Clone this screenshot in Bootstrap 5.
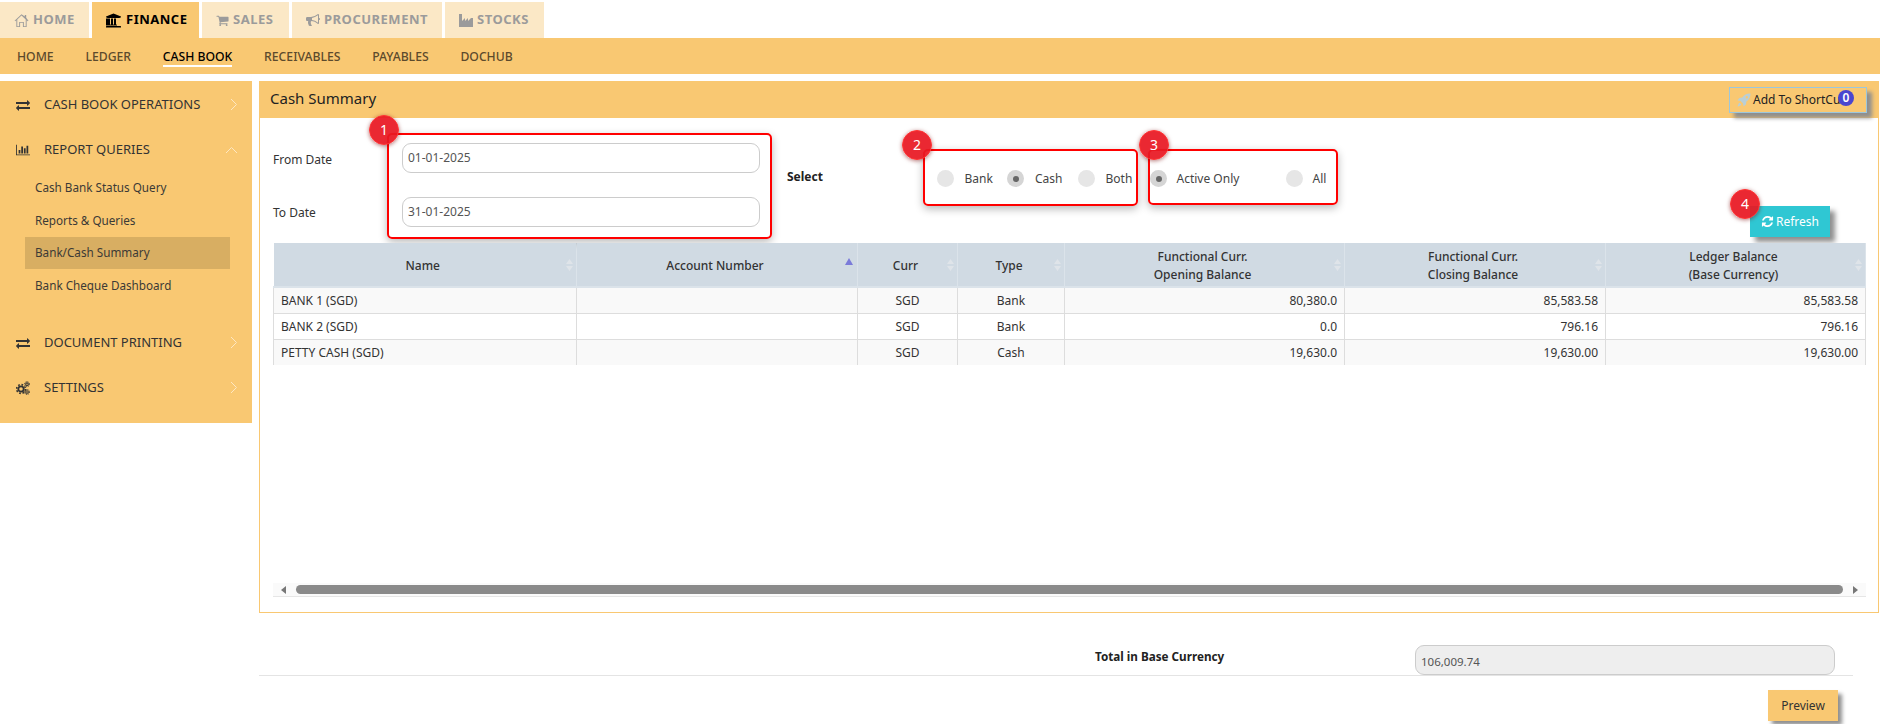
<!DOCTYPE html>
<html lang="en">
<head>
<meta charset="utf-8">
<title>Cash Summary</title>
<link href="https://cdn.jsdelivr.net/npm/bootstrap@5.3.0/dist/css/bootstrap.min.css" rel="stylesheet">
<style>
:root{--amber:#f9c872;--pale:#fbe8c6;}
html,body{height:724px;overflow:hidden;background:#fff;}
body{font-family:"Noto Sans","Open Sans",sans-serif;font-size:12px;color:#333;}
svg{fill:currentColor;display:block;flex:none;}
.topbar{padding-top:2px;height:38px;gap:3px;}
.toptab{height:36px;background:var(--pale);color:#9b9b9b;font-weight:700;font-size:13px;letter-spacing:.5px;gap:4px;padding:0 0 0 14px;text-decoration:none;}
.toptab.on{background:var(--amber);color:#000;}
.tab-home{width:89px;}.tab-fin{width:107px;}.tab-sal{width:87px;}.tab-pro{width:150px;}.tab-sto{width:99px;}
.subbar{height:36px;background:var(--amber);padding-left:17px;gap:31.8px;}
.subitem{color:#5c4a2c;font-size:12.2px;font-weight:500;text-decoration:none;line-height:17px;border-bottom:2px solid transparent;margin-top:2px;}
.subitem.on{color:#000;border-bottom-color:#fff;}
.mainrow{margin-top:7px;gap:7px;}
.sidepane{width:252px;height:342px;background:var(--amber);flex:none;color:#333;padding-top:1px;}
.sidehead{height:45px;font-size:13px;padding-left:16px;padding-right:14px;}
.sidehead svg.lead-ic{width:14px;height:14px;margin-right:14px;}
.sidechev{margin-left:auto;color:#fde7c2;}
.sidegroup{margin-top:-1px;}
.sideprint{margin-top:18px;}
.sidelink{height:33px;margin-left:25px;width:205px;padding-left:10px;display:flex;align-items:center;font-size:11.7px;color:#3c3a36;}
.sidelink.on{background:#d8ae62;height:32px;}
.contentwrap{width:1620px;flex:none;}
.panelbox{height:532px;border:1px solid var(--amber);border-top:0;}
.panelhead{height:37px;background:var(--amber);margin:0 -1px;padding:0 12px 2px 11px;font-size:15px;color:#222;position:relative;}
.shortbtn{width:138px;height:26px;margin-top:3px;border:1px solid #9cc7dc;background:var(--amber);box-shadow:5px 5px 4px #8f8f8f;font-size:12px;color:#222;padding-left:7px;gap:2px;position:relative;}
.rocket{fill:#b9cfd6;}
.countdot{position:absolute;top:2px;left:108px;width:16px;height:16px;border-radius:50%;background:#4a46cf;color:#fff;font-size:12px;font-weight:600;line-height:16px;text-align:center;}
.filters{height:125px;padding-left:13px;}
.datecol{width:114px;padding-top:33px;font-size:12px;color:#333;}
.datecol div{height:53px;}
.redbox{border:2px solid #f00;border-radius:5px;box-shadow:0 3px 8px rgba(0,0,0,.28);position:relative;flex:none;}
.numdot{position:absolute;width:30px;height:30px;border-radius:50%;background:rgba(232,24,34,.93);border:1px solid #f33;box-shadow:0 1px 4px rgba(120,0,0,.55);color:#fff;font-size:14px;line-height:28px;text-align:center;z-index:3;}
.box-date{width:385px;height:106px;margin-top:15px;padding:8px 10px 0 13px;}
.box-date .numdot{left:-20px;top:-20px;}
.datefield{height:30px;border:1px solid #ccc;border-radius:9px;padding:0 5px;color:#555;font-size:12px;margin-bottom:24px;}
.selectlbl{width:136px;margin-left:15px;margin-top:50px;font-weight:700;font-size:12px;color:#222;}
.box-src{width:215px;height:57px;margin-top:31px;font-size:12px;}
.box-src .numdot{left:-23px;top:-21px;}
.box-act{width:190px;height:56px;margin-top:31px;margin-left:10px;font-size:12px;}
.box-act .numdot{left:-11px;top:-21px;}
.radiodot{width:17px;height:17px;border-radius:50%;background:#e6e6e6;flex:none;position:relative;}
.radiodot.on{background:#d5d5d5;}
.radiodot.on::after{content:"";position:absolute;left:5.5px;top:5.5px;width:6px;height:6px;border-radius:50%;background:#666;}
.optwrap-a{position:absolute;left:11.5px;top:19px;}
.act-wrap{left:0;}
.opt{color:#444;line-height:17px;}
.box-src .radiodot{margin-right:11px}.box-src .t1{width:42.5px;}.box-src .t2{width:42.5px;}
.box-act .r1{margin-right:9.5px}.box-act .t1{width:109px;}
.box-act .r2{margin-right:10px}
.refreshbtn{margin-left:auto;margin-right:48px;margin-top:88px;width:80px;height:31px;background:#2fc7d3;color:#fff;font-size:12px;gap:2px;box-shadow:5px 5px 5px #8f8f8f;position:relative;flex:none;}
.refreshbtn .numdot{left:-20px;top:-17px;}
.gridarea{height:354px;margin-left:13px;margin-right:12px;}
.sumtable{width:1592px;table-layout:fixed;margin:0;font-size:12px;color:#333;--bs-table-striped-bg:#f9f9f9;--bs-table-border-color:#ddd;--bs-table-striped-color:#333;}
.sumtable th{background:#d0dae3;--bs-table-bg:#d0dae3;height:44px;padding:3px 26px 0 22px;text-align:center;vertical-align:middle;font-weight:500;line-height:18px;border:1px solid #dbe3ea;border-width:0 1px 2px 0;color:#333;position:relative;}
.sumtable td{height:26px;padding:1px 7px 0;vertical-align:middle;border-width:0 1px 1px 1px;}
.sumtable tbody tr:last-child td{border-bottom:0;padding-top:2px;}
.c1{width:303px}.c2{width:281px}.c3{width:100px}.c4{width:107px}.c5{width:280px}.c6{width:261px}.c7{width:260px}
.sorter{position:absolute;right:3px;top:15px;color:#dfe4e9;}
.sorter.asc{top:15px;right:4px;color:#7b7bd9;}
.scrollline{height:14px;background:#fafafa;border-bottom:1px solid #e6e6e6;padding:0 8px;color:#777;}
.scrollthumb{flex:1;height:9px;background:#8a8a8a;border-radius:5px;margin:0 10px 0 10px;}
.totalrow{margin-top:32px;width:1594px;height:31px;border-bottom:1px solid #e4e4e4;}
.totallbl{margin-left:836px;width:320px;font-weight:700;font-size:11.7px;color:#222;padding-bottom:7px;}
.totalfield{width:420px;height:30px;background:#eee;border:1px solid #ccc;border-radius:9px;padding:7px 5px 0 5px;color:#555;font-size:11.5px;margin:0;}
.previewbtn{width:70px;height:31px;background:var(--amber);font-size:12px;color:#333;margin:14px 0 0 1509px;box-shadow:4px 4px 4px #8f8f8f;}
</style>
</head>
<body>
<nav class="topbar d-flex">
  <a class="toptab tab-home d-flex align-items-center" href="#"><svg width="15" height="15" viewBox="0 0 16 16"><path d="M8 1.2 .6 8.2l.7.7L2.5 7.8V15h4v-4.5h3V15h4V7.8l1.2 1.1.7-.7L13 5V2h-1.5v1.6zM12.5 14H10.500V9.500h-5V14H3.500V6.900L8 2.600l4.500 4.300z"/></svg>HOME</a>
  <a class="toptab on tab-fin d-flex align-items-center" href="#"><svg width="16" height="15" viewBox="0 0 2048 1792"><path d="M960 0l960 384v128h-128q0 26-20.500 45t-48.500 19h-1526q-28 0-48.500-19t-20.500-45h-128v-128zm-704 640h256v768h128v-768h256v768h128v-768h256v768h59q28 0 48.500 19t20.500 45v64h-1664v-64q0-26 20.500-45t48.500-19h59v-768zm1595 960q28 0 48.500 19t20.500 45v128h-1920v-128q0-26 20.500-45t48.500-19h1782z"/></svg>FINANCE</a>
  <a class="toptab tab-sal d-flex align-items-center" href="#"><svg width="13" height="13" viewBox="0 0 1792 1792"><path d="M704 1536q0 52-38 90t-90 38-90-38-38-90 38-90 90-38 90 38 38 90zm896 0q0 52-38 90t-90 38-90-38-38-90 38-90 90-38 90 38 38 90zm128-1088v512q0 24-16.500 42.500t-40.500 21.500l-1044 122q13 60 13 70 0 16-24 64h920q26 0 45 19t19 45-19 45-45 19h-1024q-26 0-45-19t-19-45q0-11 8-31.500t16-36 21.500-40 15.500-29.500l-177-823h-204q-26 0-45-19t-19-45 19-45 45-19h256q16 0 28.500 6.500t19.500 15.500 13 24.500 8 26 5.500 29.500 4.500 26h1201q26 0 45 19t19 45z"/></svg>SALES</a>
  <a class="toptab tab-pro d-flex align-items-center" href="#"><svg width="14" height="14" viewBox="0 0 1792 1792"><path d="M1664 640q53 0 90.500 37.500t37.500 90.500-37.500 90.500-90.500 37.500v384q0 52-38 90t-90 38q-417-347-812-380-58 19-91 66t-31 100.500 40 92.500q-20 33-23 65.500t6 58 33.500 55 48 50 61.500 50.500q-29 58-111.500 83t-168.500 11.500-132-55.500q-7-23-29.500-87.500t-32-94.500-23-89-15-101 3.500-98.500 22-110.500h-122q-66 0-113-47t-47-113v-192q0-66 47-113t113-47h480q435 0 896-384 52 0 90 38t38 90v384zm-128 604v-954q-394 302-768 343v270q377 42 768 341z"/></svg>PROCUREMENT</a>
  <a class="toptab tab-sto d-flex align-items-center" href="#"><svg width="14" height="13" viewBox="0 0 14 13"><path d="M0 0h3v7l3-3v3l3-3v3l3-3h2v9H0z"/></svg>STOCKS</a>
</nav>
<nav class="subbar d-flex align-items-center">
  <a class="subitem" href="#">HOME</a><a class="subitem" href="#">LEDGER</a><a class="subitem on" href="#">CASH BOOK</a><a class="subitem" href="#">RECEIVABLES</a><a class="subitem" href="#">PAYABLES</a><a class="subitem" href="#">DOCHUB</a>
</nav>
<div class="mainrow d-flex">
  <aside class="sidepane">
    <div class="sidehead d-flex align-items-center"><svg class="lead-ic" viewBox="0 0 1792 1792"><path d="M1792 1184v192q0 13-9.500 22.500t-22.500 9.500h-1376v192q0 13-9.500 22.500t-22.500 9.500q-12 0-24-10l-319-320q-9-9-9-22 0-14 9-23l320-320q9-9 23-9 13 0 22.500 9.500t9.500 22.500v192h1376q13 0 22.500 9.500t9.500 22.500zm0-544q0 14-9 23l-320 320q-9 9-23 9-13 0-22.500-9.500t-9.500-22.500v-192h-1376q-13 0-22.500-9.500t-9.500-22.500v-192q0-13 9.500-22.500t22.500-9.500h1376v-192q0-14 9-23t23-9q12 0 24 10l319 319q9 9 9 23z"/></svg>CASH BOOK OPERATIONS<svg class="sidechev" width="8" height="13" viewBox="0 0 8 13"><path d="M1 1l5.500 5.500L1 12" fill="none" stroke="currentColor"/></svg></div>
    <div class="sidehead d-flex align-items-center"><svg class="lead-ic" viewBox="0 0 2048 1792"><path d="M640 896v512h-256v-512h256zm384-512v1024h-256v-1024h256zm1024 1152v128h-2048v-1536h128v1408h1920zm-640-896v768h-256v-768h256zm384-384v1152h-256v-1152h256z"/></svg>REPORT QUERIES<svg class="sidechev" width="13" height="8" viewBox="0 0 13 8"><path d="M1 7l5.500-5.500L12 7" fill="none" stroke="currentColor"/></svg></div>
    <div class="sidegroup">
      <div class="sidelink">Cash Bank Status Query</div>
      <div class="sidelink">Reports &amp; Queries</div>
      <div class="sidelink on">Bank/Cash Summary</div>
      <div class="sidelink">Bank Cheque Dashboard</div>
    </div>
    <div class="sidehead sideprint d-flex align-items-center"><svg class="lead-ic" viewBox="0 0 1792 1792"><path d="M1792 1184v192q0 13-9.500 22.500t-22.500 9.500h-1376v192q0 13-9.500 22.500t-22.500 9.500q-12 0-24-10l-319-320q-9-9-9-22 0-14 9-23l320-320q9-9 23-9 13 0 22.500 9.500t9.500 22.500v192h1376q13 0 22.500 9.500t9.500 22.500zm0-544q0 14-9 23l-320 320q-9 9-23 9-13 0-22.500-9.500t-9.500-22.500v-192h-1376q-13 0-22.500-9.500t-9.500-22.500v-192q0-13 9.500-22.500t22.500-9.500h1376v-192q0-14 9-23t23-9q12 0 24 10l319 319q9 9 9 23z"/></svg>DOCUMENT PRINTING<svg class="sidechev" width="8" height="13" viewBox="0 0 8 13"><path d="M1 1l5.500 5.500L1 12" fill="none" stroke="currentColor"/></svg></div>
    <div class="sidehead d-flex align-items-center"><svg class="lead-ic" viewBox="0 0 14 14"><circle cx="5" cy="8" r="2.700" fill="none" stroke="currentColor" stroke-width="1.800"/><circle cx="5" cy="8" r="4.400" fill="none" stroke="currentColor" stroke-width="1.600" stroke-dasharray="1.700 1.750"/><circle cx="11" cy="3.200" r="1.300" fill="none" stroke="currentColor" stroke-width="1.100"/><circle cx="11" cy="3.200" r="2.500" fill="none" stroke="currentColor" stroke-width="1" stroke-dasharray="1 1"/><circle cx="11" cy="11" r="1.300" fill="none" stroke="currentColor" stroke-width="1.100"/><circle cx="11" cy="11" r="2.500" fill="none" stroke="currentColor" stroke-width="1" stroke-dasharray="1 1"/></svg>SETTINGS<svg class="sidechev" width="8" height="13" viewBox="0 0 8 13"><path d="M1 1l5.500 5.500L1 12" fill="none" stroke="currentColor"/></svg></div>
  </aside>
  <main class="contentwrap">
    <section class="panelbox">
      <header class="panelhead d-flex align-items-center justify-content-between">
        <span>Cash Summary</span>
        <div class="shortbtn d-flex align-items-center"><svg class="rocket" width="14" height="14" viewBox="0 0 14 14"><path d="M13.500.5c-3.600-.2-6.300 1.200-8.200 4l-3 .5L.5 7.400l2.800.4 2.800 2.800.4 2.800 2.400-1.800.5-3c2.800-1.900 4.200-4.600 4.100-8.600zM9.800 3a1.200 1.200 0 1 1 0 2.400 1.200 1.200 0 0 1 0-2.400zM2.600 9.700c-1 .6-1.600 2-2 3.700 1.700-.4 3.100-1 3.700-2z"/></svg><span>Add To ShortCut</span><span class="countdot">0</span></div>
      </header>
      <div class="filters d-flex">
        <div class="datecol flex-none"><div>From Date</div><div>To Date</div></div>
        <div class="redbox box-date"><span class="numdot">1</span><div class="datefield d-flex align-items-center">01-01-2025</div><div class="datefield d-flex align-items-center">31-01-2025</div></div>
        <div class="selectlbl">Select</div>
        <div class="redbox box-src"><span class="numdot">2</span><div class="optwrap-a d-flex align-items-center"><span class="radiodot"></span><span class="opt t1">Bank</span><span class="radiodot on"></span><span class="opt t2">Cash</span><span class="radiodot"></span><span class="opt">Both</span></div></div>
        <div class="redbox box-act"><span class="numdot">3</span><div class="optwrap-a act-wrap d-flex align-items-center"><span class="radiodot on r1"></span><span class="opt t1">Active Only</span><span class="radiodot r2"></span><span class="opt">All</span></div></div>
        <div class="refreshbtn d-flex align-items-center justify-content-center"><span class="numdot">4</span><svg width="13" height="13" viewBox="0 0 1792 1792"><path d="M1639 1056q0 5-1 7-64 268-268 434.500t-478 166.500q-146 0-282.500-55t-243.500-157l-129 129q-19 19-45 19t-45-19-19-45v-448q0-26 19-45t45-19h448q26 0 45 19t19 45-19 45l-137 137q71 66 161 102t187 36q134 0 250-65t186-179q11-17 53-117 8-23 30-23h192q13 0 22.500 9.500t9.500 22.500zm25-800v448q0 26-19 45t-45 19h-448q-26 0-45-19t-19-45 19-45l138-138q-148-137-349-137-134 0-250 65t-186 179q-11 17-53 117-8 23-30 23h-199q-13 0-22.500-9.500t-9.500-22.500v-7q65-268 270-434.500t480-166.500q146 0 284 55.500t245 156.500l130-129q19-19 45-19t45 19 19 45z"/></svg>Refresh</div>
      </div>
      <div class="gridarea d-flex flex-column justify-content-between">
        <table class="table table-striped sumtable">
          <colgroup><col class="c1"><col class="c2"><col class="c3"><col class="c4"><col class="c5"><col class="c6"><col class="c7"></colgroup>
          <thead><tr>
            <th>Name<svg class="sorter" width="7" height="14" viewBox="0 0 7 14"><path d="M3.500 1 7 6H0zM3.500 13 0 8h7z"/></svg></th>
            <th>Account Number<svg class="sorter asc" width="8" height="7" viewBox="0 0 8 7"><path d="M4 0l4 7H0z"/></svg></th>
            <th>Curr<svg class="sorter" width="7" height="14" viewBox="0 0 7 14"><path d="M3.500 1 7 6H0zM3.500 13 0 8h7z"/></svg></th>
            <th>Type<svg class="sorter" width="7" height="14" viewBox="0 0 7 14"><path d="M3.500 1 7 6H0zM3.500 13 0 8h7z"/></svg></th>
            <th>Functional Curr.<br>Opening Balance<svg class="sorter" width="7" height="14" viewBox="0 0 7 14"><path d="M3.500 1 7 6H0zM3.500 13 0 8h7z"/></svg></th>
            <th>Functional Curr.<br>Closing Balance<svg class="sorter" width="7" height="14" viewBox="0 0 7 14"><path d="M3.500 1 7 6H0zM3.500 13 0 8h7z"/></svg></th>
            <th>Ledger Balance<br>(Base Currency)<svg class="sorter" width="7" height="14" viewBox="0 0 7 14"><path d="M3.500 1 7 6H0zM3.500 13 0 8h7z"/></svg></th>
          </tr></thead>
          <tbody>
            <tr><td>BANK 1 (SGD)</td><td></td><td class="text-center">SGD</td><td class="text-center">Bank</td><td class="text-end">80,380.0</td><td class="text-end">85,583.58</td><td class="text-end">85,583.58</td></tr>
            <tr><td>BANK 2 (SGD)</td><td></td><td class="text-center">SGD</td><td class="text-center">Bank</td><td class="text-end">0.0</td><td class="text-end">796.16</td><td class="text-end">796.16</td></tr>
            <tr><td>PETTY CASH (SGD)</td><td></td><td class="text-center">SGD</td><td class="text-center">Cash</td><td class="text-end">19,630.0</td><td class="text-end">19,630.00</td><td class="text-end">19,630.00</td></tr>
          </tbody>
        </table>
        <div class="scrollline d-flex align-items-center"><svg width="5" height="8" viewBox="0 0 5 8"><path d="M5 0v8L0 4z"/></svg><div class="scrollthumb"></div><svg width="5" height="8" viewBox="0 0 5 8"><path d="M0 0v8l5-4z"/></svg></div>
      </div>
    </section>
    <div class="totalrow d-flex align-items-center">
      <div class="totallbl">Total in Base Currency</div>
      <div class="totalfield">106,009.74</div>
    </div>
    <div class="previewbtn d-flex align-items-center justify-content-center">Preview</div>
  </main>
</div>
<script src="https://cdn.jsdelivr.net/npm/bootstrap@5.3.0/dist/js/bootstrap.bundle.min.js"></script>
</body>
</html>
